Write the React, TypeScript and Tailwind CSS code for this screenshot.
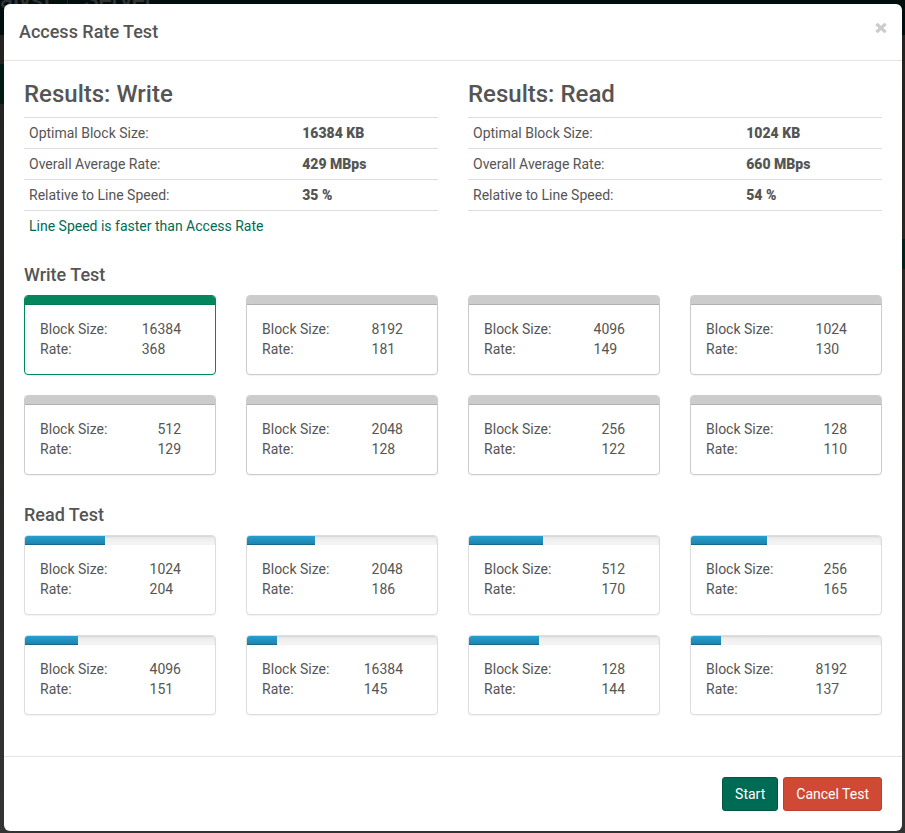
import { useState } from 'react';

type Block = { size: number; rate: number; progress: number };

const results = [
	{ title: 'Results: Write', block: '16384 KB', average: '429 MBps', relative: '35 %', note: 'Line Speed is faster than Access Rate' },
	{ title: 'Results: Read', block: '1024 KB', average: '660 MBps', relative: '54 %', note: '' },
];

const writeBlocks: Block[] = [
	{ size: 16384, rate: 368, progress: 100 },
	{ size: 8192, rate: 181, progress: 100 },
	{ size: 4096, rate: 149, progress: 100 },
	{ size: 1024, rate: 130, progress: 100 },
	{ size: 512, rate: 129, progress: 100 },
	{ size: 2048, rate: 128, progress: 100 },
	{ size: 256, rate: 122, progress: 100 },
	{ size: 128, rate: 110, progress: 100 },
];

const readBlocks: Block[] = [
	{ size: 1024, rate: 204, progress: 42 },
	{ size: 2048, rate: 186, progress: 36 },
	{ size: 512, rate: 170, progress: 39 },
	{ size: 256, rate: 165, progress: 40 },
	{ size: 4096, rate: 151, progress: 28 },
	{ size: 16384, rate: 145, progress: 16 },
	{ size: 128, rate: 144, progress: 37 },
	{ size: 8192, rate: 137, progress: 16 },
];

function ResultTable({ result }: { result: (typeof results)[0] }) {
	const rows = [
		['Optimal Block Size:', result.block],
		['Overall Average Rate:', result.average],
		['Relative to Line Speed:', result.relative],
	];

	return (
		<section>
			<h3 className="mb-2.5 text-2xl leading-[26px] font-medium">{result.title}</h3>
			<table className="w-full table-fixed border-collapse">
				<tbody>
					{rows.map(([label, value]) => (
						<tr key={label} className="border-y border-[#ddd]">
							<th scope="row" className="w-[66%] p-[5px] text-left font-normal">{label}</th>
							<td className="p-[5px] font-black">{value}</td>
						</tr>
					))}
				</tbody>
			</table>
			{result.note && <p className="p-[5px] text-[#006b54]">{result.note}</p>}
		</section>
	);
}

function BlockCard({ block, best }: { block: Block; best?: boolean }) {
	const done = block.progress === 100;
	const border = best ? 'border-[#01875b]' : done ? 'border-[#ccc]' : 'border-[#ddd]';
	const fill = best
		? 'bg-[#01875b] shadow-[inset_0_-1px_0_#017a50]'
		: done
			? 'bg-[#ccc] shadow-[inset_0_-1px_0_#b0b0b0]'
			: 'bg-linear-to-b from-[#269fcf] to-[#1d81ab] shadow-[inset_0_-1px_0_#17698c]';

	return (
		<div className={`overflow-hidden rounded border bg-white shadow-[0_1px_1px_rgba(0,0,0,0.05)] ${border}`}>
			<div className="h-[9px] bg-linear-to-b from-[#ebebeb] to-[#f5f5f5] shadow-[inset_0_1px_2px_rgba(0,0,0,0.1)]">
				<div className={`h-full ${fill}`} style={{ width: `${block.progress}%` }} />
			</div>
			<div className="flex justify-between pt-3.5 pr-[34px] pb-[15px] pl-[15px]">
				<div>
					<div>Block Size:</div>
					<div>Rate:</div>
				</div>
				<div>
					<div>{block.size}</div>
					<div>{block.rate}</div>
				</div>
			</div>
		</div>
	);
}

function BlockGrid({ title, blocks, bestSize }: { title: string; blocks: Block[]; bestSize?: number }) {
	return (
		<section className="mb-[30px] last:mb-5">
			<h4 className="mb-2.5 text-lg leading-5 font-medium">{title}</h4>
			<div className="grid grid-cols-4 gap-x-[30px] gap-y-5">
				{blocks.map((block) => (
					<BlockCard key={block.size} block={block} best={block.size === bestSize} />
				))}
			</div>
		</section>
	);
}

// Dimmed page behind the dialog
function Backdrop() {
	return (
		<div aria-hidden="true" className="fixed inset-0 flex flex-col overflow-hidden bg-linear-to-b from-[#242220] to-[#333]">
			<div className="flex h-[35px] shrink-0 items-start bg-[#000f0e] text-2xl leading-none font-medium text-[#333]">
				<div className="-mt-3 border-r border-[#1a2524] pr-4">alyst</div>
				<div className="-mt-3 pl-4">Server</div>
			</div>
			<div className="mt-[29px] h-10 w-1 shrink-0 bg-[#001a14]" />
			<div className="mt-[135px] h-[30px] w-1 shrink-0 self-end bg-[#00221a]" />
		</div>
	);
}

export default function App() {
	const [open, setOpen] = useState(true);

	return (
		<div className="min-h-screen pt-1 pr-[3px] pb-0.5 pl-1 font-['Roboto',sans-serif] text-sm leading-5 text-[#555]">
			<Backdrop />
			{open && (
				<div role="dialog" aria-labelledby="dialog-title" className="relative rounded-md bg-white">
					<header className="flex items-start justify-between border-b border-[#e5e5e5] p-[15px]">
						<h2 id="dialog-title" className="text-lg leading-[26px] font-medium">Access Rate Test</h2>
						<button
							type="button"
							aria-label="Close"
							className="py-1 text-[#ccc] hover:text-[#888]"
							onClick={() => setOpen(false)}
						>
							<svg width="12" height="10" viewBox="0 0 12 10" fill="none" stroke="currentColor" strokeWidth="3.2">
								<path d="M1.4 .8 10.6 9.2M10.6 .8 1.4 9.2" />
							</svg>
						</button>
					</header>

					<main className="px-5 pt-5 pb-[21px]">
						<div className="mb-6 grid grid-cols-2 gap-[30px]">
							{results.map((result) => (
								<ResultTable key={result.title} result={result} />
							))}
						</div>
						<BlockGrid title="Write Test" blocks={writeBlocks} bestSize={16384} />
						<BlockGrid title="Read Test" blocks={readBlocks} />
					</main>

					<footer className="flex justify-end gap-[5px] border-t border-[#e5e5e5] p-5">
						<button type="button" className="rounded-[3px] border border-[#005643] bg-[#006b54] px-3 py-1.5 text-white">
							Start
						</button>
						<button
							type="button"
							className="rounded-[3px] border border-[#bd3f2c] bg-[#d04935] px-3 py-1.5 text-white"
							onClick={() => setOpen(false)}
						>
							Cancel Test
						</button>
					</footer>
				</div>
			)}
		</div>
	);
}
